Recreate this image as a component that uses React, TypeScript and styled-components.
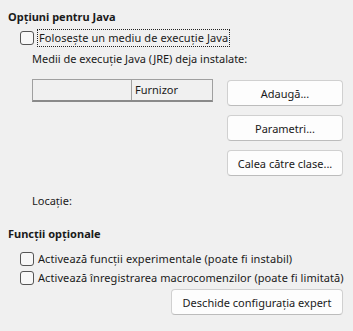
import React from "react";
import styled, { createGlobalStyle } from "styled-components";

const GlobalStyle = createGlobalStyle`
  body {
    margin: 0;
    background: #f0f0f0;
    font-family: "Noto Sans", "Open Sans", sans-serif;
    font-size: 11px;
    color: #1a1a1a;
  }
`;

const Page = styled.div`
  width: 353px;
  height: 331px;
  padding: 9px 10px 0 8px;
  box-sizing: border-box;
  display: flex;
  flex-direction: column;
`;

const Heading = styled.div<{ $top?: number }>`
  font-weight: 700;
  line-height: 16px;
  margin-top: ${(p) => p.$top ?? 0}px;
`;

const CheckRow = styled.label<{ $top?: number }>`
  display: flex;
  align-items: center;
  gap: 4px;
  margin-left: 12px;
  margin-top: ${(p) => p.$top ?? 0}px;
  line-height: 16px;
  height: 17px;
  white-space: nowrap;
  letter-spacing: 0.08px;
`;

const Box = styled.span`
  width: 12px;
  height: 12px;
  border: 1px solid #555;
  border-radius: 3px;
  background: #f7f7f7;
  flex: none;
`;

const Focused = styled.span`
  outline: 1px dotted #222;
  outline-offset: 0;
  padding: 0 1px;
`;

const JavaBody = styled.div`
  display: flex;
  margin-top: 5px;
  padding-left: 24px;
`;

const LeftCol = styled.div`
  width: 181px;
  display: flex;
  flex-direction: column;
`;

const Note = styled.div<{ $top?: number }>`
  line-height: 16px;
  white-space: nowrap;
  margin-top: ${(p) => p.$top ?? 0}px;
`;

const Table = styled.div`
  margin-top: 12px;
  height: 23px;
  box-sizing: border-box;
  border: 1px solid #a0a0a0;
  border-bottom: 2px solid #8a8a8a;
  background: #f0f0f0;
  display: grid;
  grid-template-columns: 98px 1fr;
`;

const HeaderCell = styled.div`
  line-height: 19px;
  padding-left: 3px;
  & + & {
    border-left: 1px solid #a0a0a0;
  }
`;

const RightCol = styled.div`
  margin-left: 14px;
  padding-top: 29px;
  display: flex;
  flex-direction: column;
  gap: 9px;
`;

const Button = styled.button<{ $width?: number }>`
  width: ${(p) => p.$width ?? 116}px;
  height: 26px;
  box-sizing: border-box;
  background: #fdfdfd;
  border: 1px solid #d0d0d0;
  border-bottom-color: #bcbcbc;
  border-radius: 4px;
  font: inherit;
  color: #1a1a1a;
  padding: 0;
`;

const FooterRow = styled.div`
  display: flex;
  justify-content: flex-end;
  margin-top: 3px;
`;

export default function App() {
  return (
    <>
      <GlobalStyle />
      <Page>
        <Heading>Opțiuni pentru Java</Heading>
        <CheckRow $top={4}>
          <Box />
          <Focused>Folosește un mediu de execuție Java</Focused>
        </CheckRow>
        <JavaBody>
          <LeftCol>
            <Note>Medii de execuție Java (JRE) deja instalate:</Note>
            <Table>
              <HeaderCell />
              <HeaderCell>Furnizor</HeaderCell>
            </Table>
            <Note $top={91}>Locație:</Note>
          </LeftCol>
          <RightCol>
            <Button>Adaugă...</Button>
            <Button>Parametri...</Button>
            <Button>Calea către clase...</Button>
          </RightCol>
        </JavaBody>
        <Heading $top={17}>Funcții opționale</Heading>
        <CheckRow $top={8}>
          <Box />
          <span>Activează funcții experimentale (poate fi instabil)</span>
        </CheckRow>
        <CheckRow $top={2}>
          <Box />
          <span>Activează înregistrarea macrocomenzilor (poate fi limitată)</span>
        </CheckRow>
        <FooterRow>
          <Button $width={172}>Deschide configurația expert</Button>
        </FooterRow>
      </Page>
    </>
  );
}
